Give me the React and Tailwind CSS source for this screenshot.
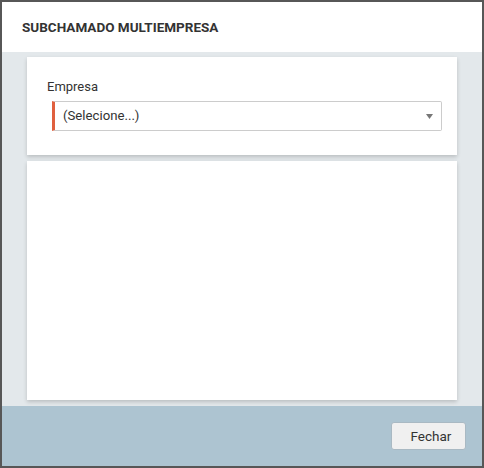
import React from "react";

export default function App() {
  return (
    <div className="w-[484px] h-[468px] bg-[#575757] p-[2px] font-['Roboto',_'Liberation_Sans',_sans-serif] text-[#333]">
      <div className="flex h-full flex-col">
        <div className="flex h-[50px] items-center bg-white pl-[20px] pt-[1px]">
          <h1 className="text-[13.5px] font-bold text-[#333]">SUBCHAMADO MULTIEMPRESA</h1>
        </div>

        <div className="flex flex-1 flex-col gap-[6px] bg-[#e3e8eb] px-[25px] pt-[5px] pb-[6px]">
          <div className="bg-white pl-[20px] pt-[22px] pb-[24px] shadow-[0_2px_4px_rgba(0,0,0,0.18)]">
            <label className="block text-[13px] leading-[16px] text-[#333]">Empresa</label>
            <div className="relative ml-[5px] mt-[6px] flex h-[30px] w-[390px] items-center rounded-r-[2px] border border-l-[3px] border-[#ccc] border-l-[#e0603f] pl-[8px]">
              <span className="text-[13.2px] text-[#333]">(Selecione...)</span>
              <svg className="absolute right-[8px] top-[12px]" width="7" height="5" viewBox="0 0 7 5">
                <path d="M0 0 H7 L3.5 5 Z" fill="#777" />
              </svg>
            </div>
          </div>
          <div className="flex-1 bg-white shadow-[0_2px_4px_rgba(0,0,0,0.18)]" />
        </div>

        <div className="flex h-[60px] items-start justify-end bg-[#adc4d1] pt-[16px] pr-[16px]">
          <button className="h-[28px] w-[75px] rounded-[3px] border border-[#a9b9c3] bg-[#f0f0f0] pl-[5px] text-[13.5px] text-[#333]">
            Fechar
          </button>
        </div>
      </div>
    </div>
  );
}
